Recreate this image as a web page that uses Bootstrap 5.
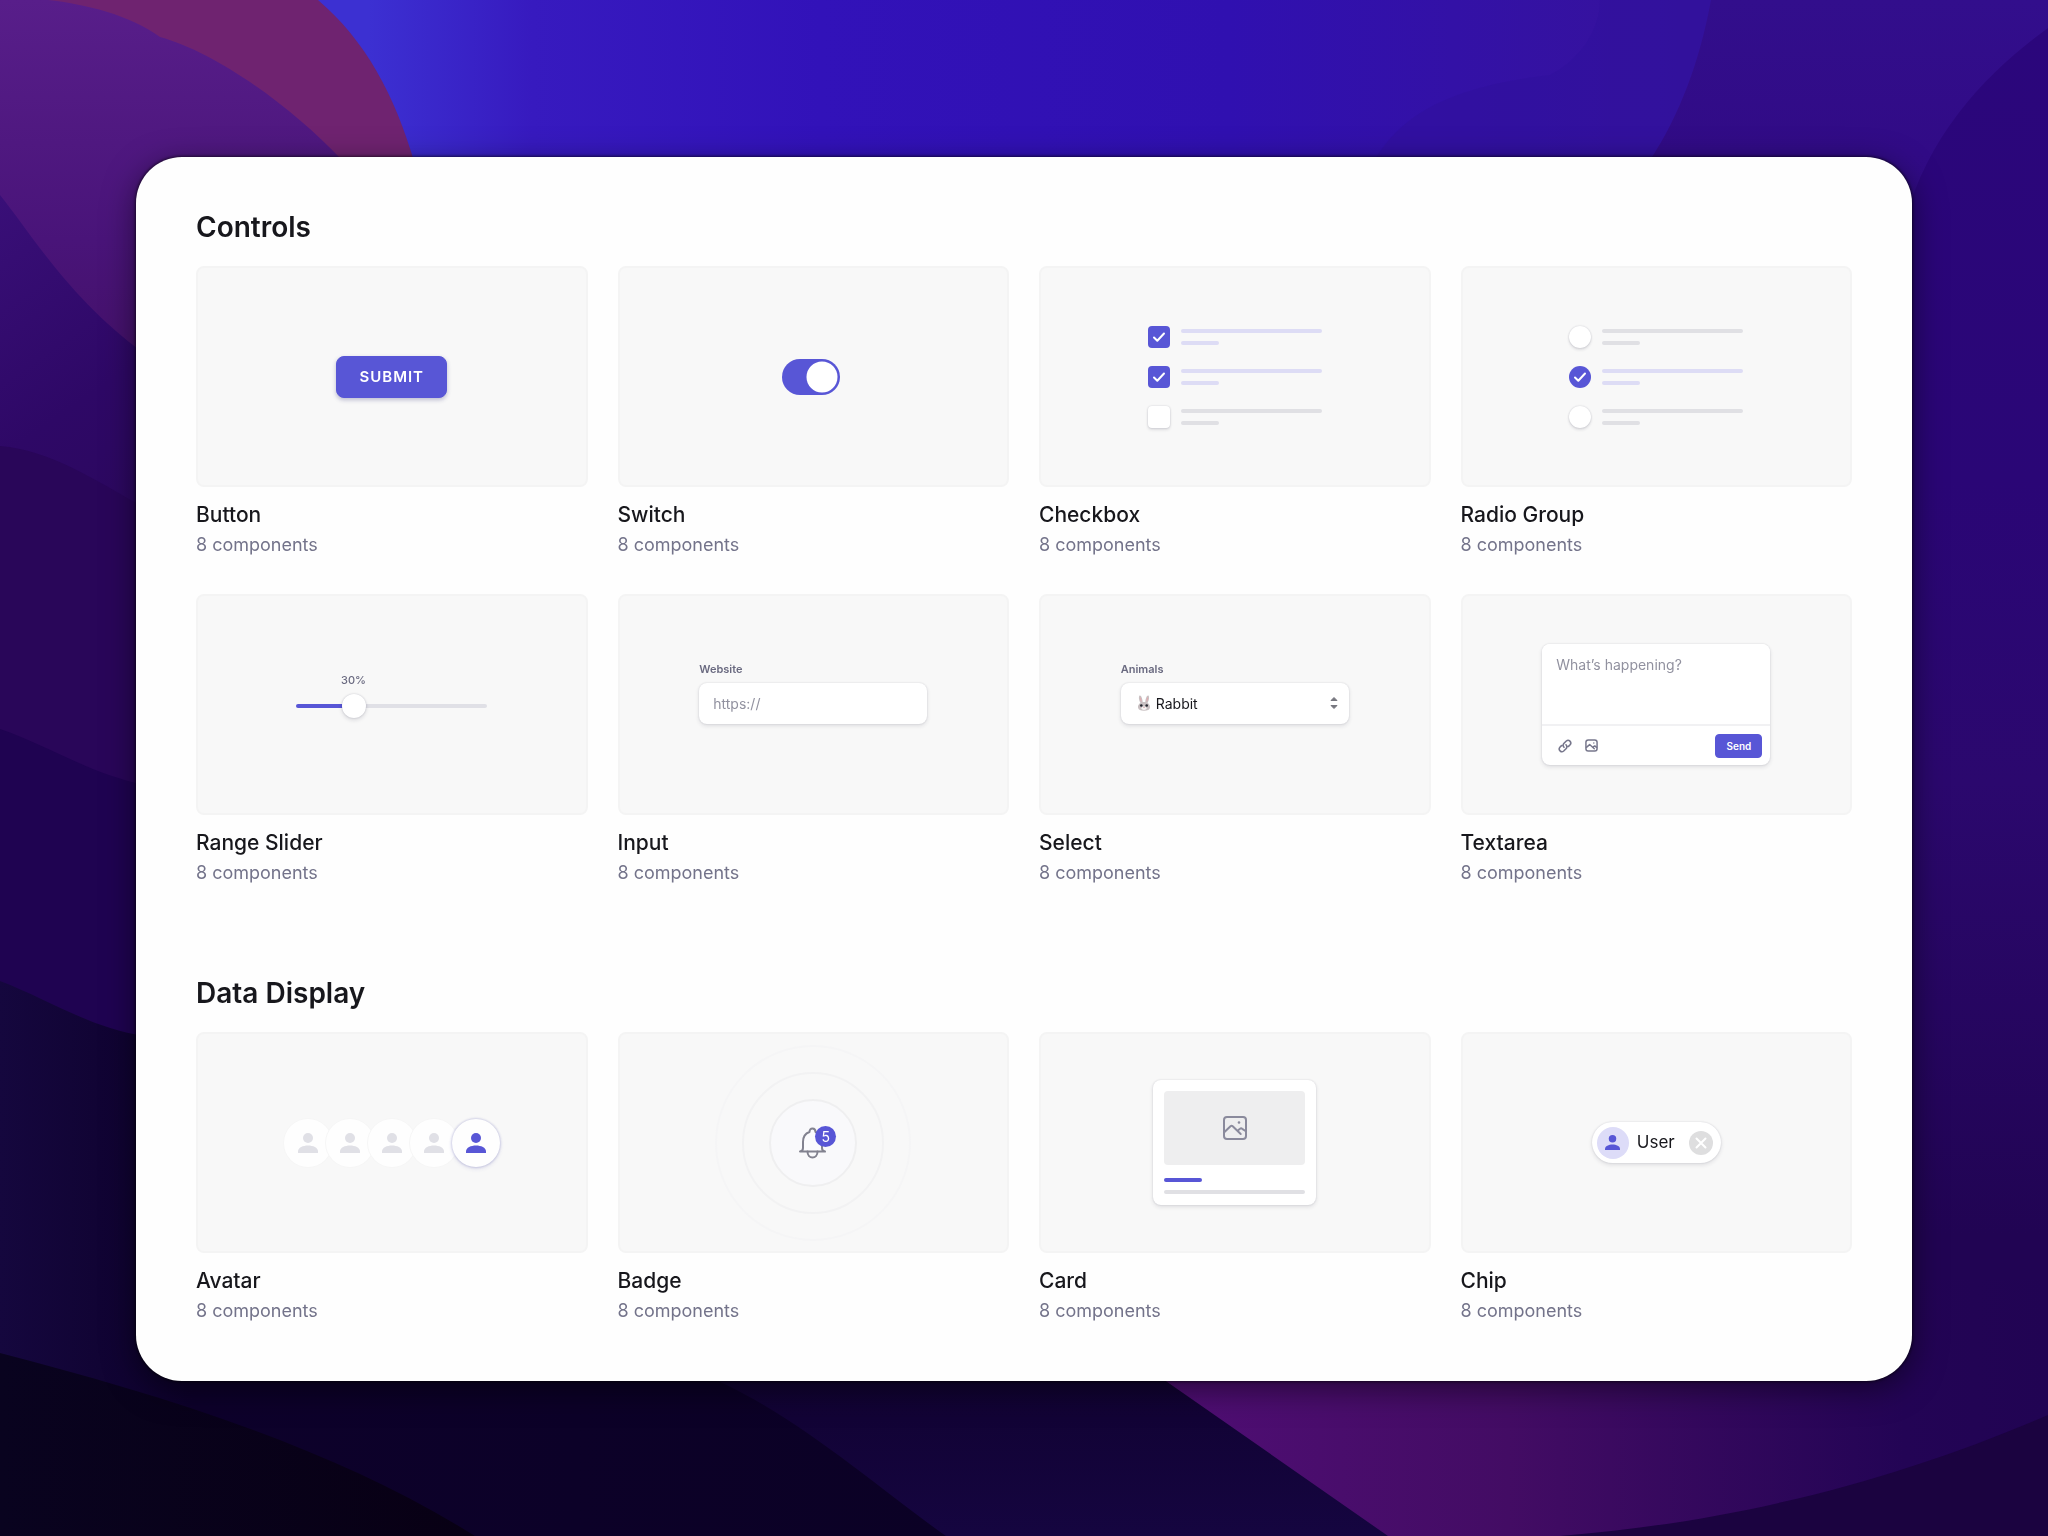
<!DOCTYPE html>
<html lang="en">
<head>
<meta charset="utf-8">
<meta name="viewport" content="width=device-width, initial-scale=1">
<title>Component library</title>
<link href="https://cdn.jsdelivr.net/npm/bootstrap@5.3.0/dist/css/bootstrap.min.css" rel="stylesheet">
<style>
:root{--accent:#5856d6;--ink:#17171c;--dim:#73738a;--line:#e0e0e4;--line-accent:#dddcf5}
body{font-family:Inter,"Liberation Sans",sans-serif;color:var(--ink);background:#1c0348;min-height:100vh}
.wallpaper{position:fixed;inset:0;width:100%;height:100%;z-index:-1}
.page{padding:157px 136px 155px}
.panel{background:#fefefe;border-radius:46px;padding:52px 60px 58px;box-shadow:0 0 3px 1px rgba(0,0,0,.55),0 8px 32px rgba(0,0,0,.5)}
.group + .group{margin-top:90px}
.group-title{font-size:28px;line-height:36px;font-weight:600;margin:0 0 21px}
.tiles{--bs-gutter-x:30px;--bs-gutter-y:37px}
.preview{height:221px;background:#f8f8f8;border:2px solid #f4f4f4;border-radius:8px;overflow:hidden}
.tile-title{font-size:21px;line-height:28px;font-weight:500;margin:14px 0 4px}
.tile-note{font-size:18px;line-height:24px;color:var(--dim);margin:0}
.raised{background:#fff;border:0;box-shadow:0 0 2px rgba(30,30,60,.14),0 2px 4px rgba(30,30,60,.12)}
.btn-accent{--bs-btn-color:#fff;--bs-btn-bg:var(--accent);--bs-btn-border-color:var(--accent);--bs-btn-hover-color:#fff;--bs-btn-hover-bg:#4a48c4;--bs-btn-hover-border-color:#4a48c4}
.btn-submit{font-size:15px;line-height:20px;font-weight:600;letter-spacing:1px;padding:10px 22px;border-radius:8px;box-shadow:0 2px 4px rgba(50,50,120,.3)}
.form-check-input{margin:0;border:0;float:none}
.toggle.form-check-input{width:58px;height:36px;margin-right:4px;border-radius:18px;background-color:#d8d8de;background-size:32px 32px;background-repeat:no-repeat;background-position:left 2px center;--knob:url("data:image/svg+xml,%3csvg xmlns='http://www.w3.org/2000/svg' viewBox='0 0 32 32'%3e%3ccircle cx='16' cy='16' r='15.5' fill='%23fff'/%3e%3c/svg%3e");background-image:var(--knob)}
.toggle.form-check-input:checked{background-image:var(--knob);background-position:right 2px center}
.form-check-input[type]:checked{background-color:var(--accent)}
.tick{width:22px;height:22px;flex:none}
.tick:not(:checked){background:#fff;box-shadow:0 0 2px rgba(30,30,60,.2),0 2px 3px rgba(30,30,60,.12)}
.tick:checked[type]{background-image:url("data:image/svg+xml,%3csvg xmlns='http://www.w3.org/2000/svg' viewBox='0 0 22 22'%3e%3cpath fill='none' stroke='%23fff' stroke-width='2' stroke-linecap='round' stroke-linejoin='round' d='m6 11.5 3.300 3.300 6.700-7.300'/%3e%3c/svg%3e")}
.tick[type=checkbox]{border-radius:4px}
.options{gap:18px;width:174px}
.option{gap:11px}
.bars{gap:8px}
.bar{height:4px;border-radius:2px;background:var(--line)}
.bar-short{width:38px}
.option:has(:checked) .bar{background:var(--line-accent)}
.field{width:228px;padding-bottom:25px}
.field-label{font-size:11px;line-height:16px;font-weight:600;color:#6a6a80;margin-bottom:6px}
.field-box{height:41px;border-radius:8px;padding:0 11px 0 14px;font-size:14px;width:100%;color:var(--ink)}
.field-box::placeholder,.post-text::placeholder{color:#91919f;opacity:1}
.field select{appearance:none;border:0;background:none;font-size:14px;color:var(--ink);padding:0}
.slider{--value:30%;width:191px}
.slider output{width:calc(var(--value) * 2);font-weight:500;margin-bottom:16px}
.slider-track{height:4px;margin-bottom:4px;border-radius:2px;background:linear-gradient(to right,var(--accent) var(--value),#e0e0e6 var(--value))}
.slider-track input{appearance:none;background:none;height:24px;margin:0 -12px;flex:1 0 auto;width:calc(100% + 24px)}
.slider-track input::-webkit-slider-thumb{appearance:none;width:24px;height:24px;border-radius:50%;background:#fff;box-shadow:0 0 2px rgba(30,30,60,.2),0 2px 4px rgba(30,30,60,.14)}
.slider-track input::-moz-range-thumb{width:24px;height:24px;border:0;border-radius:50%;background:#fff}
.post{width:228px;border-radius:8px;overflow:hidden}
.post-text{height:80px;border:0;resize:none;font-size:14px;line-height:20px;padding:11px 14px;color:var(--ink)}
.post-bar{height:41px;border-top:2px solid #f1f1f3;padding:0 8px 0 14px}
.icon-btn{border:0;background:none;padding:0;width:18px;height:18px;display:flex;align-items:center;justify-content:center;color:#77778c}
.btn-send{font-size:10px;line-height:14px;font-weight:600;padding:4px 10px;border-radius:4px}
.face{width:48px;height:48px;border-radius:50%;background:#fefefe;box-shadow:0 0 0 1px #f6f6f6;color:#e0e0e6}
.face + .face{margin-left:-6px}
.face-on{color:var(--accent);box-shadow:0 0 2px 1px rgba(60,60,160,.18),0 2px 4px rgba(60,60,160,.12)}
.bell{width:28px;height:32px}
.rings{position:absolute;left:-86px;top:-84px}
.count{left:16px;top:-1px;width:21px;height:21px;border-radius:50%;background:var(--accent);color:#fff;font-size:14px;line-height:21px;text-align:center}
.mini{width:163px;border-radius:8px;padding:11px}
.mini-pic{height:74px;border-radius:4px;background:#eeeeef;color:#8a8a9c;margin-bottom:13px}
.bar-accent{background:var(--accent);width:38px}
.chip{height:41px;border-radius:21px;padding:0 8px 0 5px;font-size:17px;font-weight:400}
.chip-face{width:32px;height:32px;border-radius:50%;background:#dddcf8;color:var(--accent)}
.chip-x{width:24px;height:24px;border-radius:50%;background:#dededf;color:#fff;border:0;padding:0;margin-left:6px}
</style>
</head>
<body>
<svg class="wallpaper" viewBox="0 0 2048 1536" preserveAspectRatio="none" aria-hidden="true">
  <defs>
    <linearGradient id="sky"><stop offset=".18" stop-color="#3c30d2"/><stop offset=".26" stop-color="#371abf"/><stop offset=".4" stop-color="#3212b9"/><stop offset=".6" stop-color="#3010b0"/><stop offset=".82" stop-color="#36129c"/></linearGradient>
    <linearGradient id="east" x2="0" y2="1"><stop offset="0" stop-color="#320e8c"/><stop offset=".1" stop-color="#310b86"/><stop offset=".4" stop-color="#2a0472"/><stop offset="1" stop-color="#220456"/></linearGradient>
    <linearGradient id="east2" x2="0" y2="1"><stop offset="0" stop-color="#2b067c"/><stop offset=".3" stop-color="#2a0676"/><stop offset=".5" stop-color="#2b086e"/><stop offset=".8" stop-color="#210453"/></linearGradient>
    <linearGradient id="plum" x2="0" y2="1"><stop offset="0" stop-color="#581e8a"/><stop offset=".6" stop-color="#491479"/><stop offset="1" stop-color="#421064"/></linearGradient>
    <linearGradient id="w1" x2=".2" y2="1"><stop offset="0" stop-color="#390f78"/><stop offset=".5" stop-color="#2e0866"/><stop offset="1" stop-color="#2a085a"/></linearGradient>
    <linearGradient id="w4"><stop offset="0" stop-color="#15073e"/><stop offset=".2" stop-color="#0d012b"/><stop offset="1" stop-color="#0b0125"/></linearGradient>
    <linearGradient id="navy" x2="0" y2="1"><stop offset="0" stop-color="#0f012c"/><stop offset="1" stop-color="#150540"/></linearGradient>
    <linearGradient id="magenta"><stop offset="0" stop-color="#500e75"/><stop offset=".4" stop-color="#430c64"/><stop offset=".84" stop-color="#230455"/><stop offset="1" stop-color="#210453"/></linearGradient>
    <linearGradient id="night"><stop offset="0" stop-color="#09031f"/><stop offset="1" stop-color="#080014"/></linearGradient>
  </defs>
  <rect width="2048" height="1536" fill="url(#sky)"/>
  <path fill="#31109c" d="M1365 180C1390 120 1440 88 1550 75 1580 60 1600 30 1600 0H1720V180Z" opacity=".6"/>
  <path fill="url(#east)" d="M1711 0C1700 60 1680 115 1650 160V1536H2048V0Z"/>
  <path fill="url(#east2)" d="M2048 28C1990 70 1930 130 1905 220V1536H2048Z"/>
  <path fill="#6f2370" d="M0 0H318C365 40 395 95 415 165L420 300H0Z"/>
  <path fill="url(#plum)" d="M0 0H48C85 4 130 15 160 37 215 52 290 105 342 160V400H0Z"/>
  <path fill="url(#w1)" d="M0 195C30 232 70 300 145 354V700H0Z"/>
  <path fill="#290659" d="M0 446C50 450 95 480 145 508V900H0Z"/>
  <path fill="#1f0351" d="M0 729C45 744 90 774 145 785V1200H0Z"/>
  <path fill="url(#w4)" d="M0 981C50 1000 90 1028 145 1036V1300H960V1536H0Z"/>
  <path fill="url(#navy)" d="M690 1370C780 1400 880 1490 946 1536H1400V1300H690Z"/>
  <path fill="url(#magenta)" d="M1150 1370 1388 1536H2048V1280H1905V1370Z"/>
  <path fill="#1b0340" d="M2048 1415C1920 1470 1760 1520 1560 1536H2048Z"/>
  <path fill="url(#night)" d="M0 1353C150 1392 330 1445 475 1536H0Z"/>
</svg>

<svg class="d-none" aria-hidden="true">
  <symbol id="person" viewBox="0 0 20 20"><circle cx="10" cy="5" r="5"/><path d="M0 20v-1.500C0 14.500 5 12.500 10 12.500s10 2 10 6V20Z"/></symbol>
  <symbol id="picture" viewBox="0 0 24 24"><g fill="none" stroke="currentColor" stroke-width="2" stroke-linejoin="round" stroke-linecap="round"><rect x="1" y="1" width="22" height="22" rx="3"/><path d="m1.500 16 6-5.700c.7-.6 1.500-.6 2.200 0l8 7.700M14.500 14.800l2.500-2c.7-.6 1.500-.6 2.200 0L22.500 15"/></g><circle cx="16" cy="6.500" r="1.300" fill="currentColor"/></symbol>
</svg>

<main class="page">
  <div class="panel">
    <section class="group">
      <h2 class="group-title">Controls</h2>
      <div class="row row-cols-4 tiles">
        <article class="col">
          <div class="preview d-flex align-items-center justify-content-center">
            <button type="button" class="btn btn-accent btn-submit">SUBMIT</button>
          </div>
          <h3 class="tile-title">Button</h3><p class="tile-note">8 components</p>
        </article>
        <article class="col">
          <div class="preview d-flex align-items-center justify-content-center">
            <input class="form-check-input toggle" type="checkbox" role="switch" aria-label="Switch" checked>
          </div>
          <h3 class="tile-title">Switch</h3><p class="tile-note">8 components</p>
        </article>
        <article class="col">
          <div class="preview d-flex align-items-center justify-content-center">
            <div class="options d-flex flex-column">
              <label class="option d-flex align-items-center"><input class="form-check-input tick" type="checkbox" aria-label="Option 1" checked><span class="bars d-flex flex-column flex-fill"><span class="bar"></span><span class="bar bar-short"></span></span></label>
              <label class="option d-flex align-items-center"><input class="form-check-input tick" type="checkbox" aria-label="Option 2" checked><span class="bars d-flex flex-column flex-fill"><span class="bar"></span><span class="bar bar-short"></span></span></label>
              <label class="option d-flex align-items-center"><input class="form-check-input tick" type="checkbox" aria-label="Option 3"><span class="bars d-flex flex-column flex-fill"><span class="bar"></span><span class="bar bar-short"></span></span></label>
            </div>
          </div>
          <h3 class="tile-title">Checkbox</h3><p class="tile-note">8 components</p>
        </article>
        <article class="col">
          <div class="preview d-flex align-items-center justify-content-center">
            <div class="options d-flex flex-column">
              <label class="option d-flex align-items-center"><input class="form-check-input tick" type="radio" name="choice" aria-label="Choice 1"><span class="bars d-flex flex-column flex-fill"><span class="bar"></span><span class="bar bar-short"></span></span></label>
              <label class="option d-flex align-items-center"><input class="form-check-input tick" type="radio" name="choice" aria-label="Choice 2" checked><span class="bars d-flex flex-column flex-fill"><span class="bar"></span><span class="bar bar-short"></span></span></label>
              <label class="option d-flex align-items-center"><input class="form-check-input tick" type="radio" name="choice" aria-label="Choice 3"><span class="bars d-flex flex-column flex-fill"><span class="bar"></span><span class="bar bar-short"></span></span></label>
            </div>
          </div>
          <h3 class="tile-title">Radio Group</h3><p class="tile-note">8 components</p>
        </article>
        <article class="col">
          <div class="preview d-flex align-items-center justify-content-center">
            <div class="field slider">
              <output class="field-label d-block text-center" for="range">30%</output>
              <div class="slider-track d-flex align-items-center"><input id="range" type="range" min="0" max="100" value="30" aria-label="Range"></div>
            </div>
          </div>
          <h3 class="tile-title">Range Slider</h3><p class="tile-note">8 components</p>
        </article>
        <article class="col">
          <div class="preview d-flex align-items-center justify-content-center">
            <div class="field">
              <label class="field-label d-block" for="website">Website</label>
              <input id="website" type="text" class="field-box raised" placeholder="https://">
            </div>
          </div>
          <h3 class="tile-title">Input</h3><p class="tile-note">8 components</p>
        </article>
        <article class="col">
          <div class="preview d-flex align-items-center justify-content-center">
            <div class="field">
              <label class="field-label d-block" for="animal">Animals</label>
              <div class="field-box raised d-flex align-items-center">
                <svg class="me-1 flex-shrink-0" width="17" height="16" viewBox="-1 0 17 16" aria-hidden="true"><path fill="#c9c0c2" d="M4.500 8C2.500 5 2.600 1 3.700.6 5.300.2 6.500 4 6.700 7h2.600C9.500 4 10.700.2 12.300.6c1.100.4 1.200 4.400-.8 7.400 1.800 1 2.700 2.500 2.500 4.500-.3 2.200-2.500 3.200-6 3.200s-5.700-1-6-3.200C1.800 10.500 2.700 9 4.500 8Z"/><path fill="#e6a9ae" d="M4 2c.8.500 1.500 2.800 1.600 5-1-.8-2-3-1.600-5Zm8 0c-.8.500-1.500 2.800-1.600 5 1-.8 2-3 1.600-5Z"/><circle cx="5.300" cy="10.500" r="1.300" fill="#26262e"/><circle cx="10.700" cy="10.500" r="1.300" fill="#26262e"/><ellipse cx="8" cy="13.200" rx="2.500" ry="1.800" fill="#f7f4f4"/><path fill="#c9767f" d="M7.200 12h1.600L8 13Z"/></svg>
                <select id="animal" class="flex-fill"><option>Rabbit</option></select>
                <svg class="flex-shrink-0" width="8" height="14" viewBox="0 0 8 14" fill="#77777f" stroke="#77777f" stroke-linejoin="round" aria-hidden="true"><path d="m1 4.500 3-3 3 3ZM1 9.500l3 3 3-3Z"/></svg>
              </div>
            </div>
          </div>
          <h3 class="tile-title">Select</h3><p class="tile-note">8 components</p>
        </article>
        <article class="col">
          <div class="preview d-flex align-items-center justify-content-center">
            <div class="post raised d-flex flex-column">
              <textarea class="post-text" placeholder="What’s happening?" aria-label="Post"></textarea>
              <div class="post-bar d-flex align-items-center gap-2">
                <button type="button" class="icon-btn" aria-label="Attach link"><svg width="14" height="14" viewBox="0 0 14 14" fill="none" stroke="currentColor" stroke-width="1.600" stroke-linecap="round"><path d="M6 8.200a2.800 2.800 0 0 1-.2-3.700L8.300 2a2.700 2.700 0 0 1 3.800 3.800l-1.600 1.600M8 5.800a2.800 2.800 0 0 1 .2 3.700L5.700 12a2.700 2.700 0 0 1-3.800-3.800l1.600-1.600"/></svg></button>
                <button type="button" class="icon-btn" aria-label="Attach picture"><svg width="13" height="13" viewBox="0 0 14 14" fill="none" stroke="currentColor" stroke-width="1.600" stroke-linecap="round" stroke-linejoin="round"><rect x="1" y="1" width="12" height="12" rx="2.500"/><path d="M1.500 9 5 6l5 4.500M8.500 8.800 10.500 7.500 12.500 9"/><path d="M9.500 4.200v.1"/></svg></button>
                <button type="button" class="btn btn-accent btn-send ms-auto">Send</button>
              </div>
            </div>
          </div>
          <h3 class="tile-title">Textarea</h3><p class="tile-note">8 components</p>
        </article>
      </div>
    </section>

    <section class="group">
      <h2 class="group-title">Data Display</h2>
      <div class="row row-cols-4 tiles">
        <article class="col">
          <div class="preview d-flex align-items-center justify-content-center">
            <span class="face d-flex align-items-center justify-content-center"><svg width="20" height="20" fill="currentColor"><use href="#person"/></svg></span>
            <span class="face d-flex align-items-center justify-content-center"><svg width="20" height="20" fill="currentColor"><use href="#person"/></svg></span>
            <span class="face d-flex align-items-center justify-content-center"><svg width="20" height="20" fill="currentColor"><use href="#person"/></svg></span>
            <span class="face d-flex align-items-center justify-content-center"><svg width="20" height="20" fill="currentColor"><use href="#person"/></svg></span>
            <span class="face face-on d-flex align-items-center justify-content-center"><svg width="20" height="20" fill="currentColor"><use href="#person"/></svg></span>
          </div>
          <h3 class="tile-title">Avatar</h3><p class="tile-note">8 components</p>
        </article>
        <article class="col">
          <div class="preview d-flex align-items-center justify-content-center">
            <div class="bell position-relative">
              <svg class="rings" width="200" height="200" viewBox="0 0 200 200" fill="none" stroke="#f1f1f2" stroke-width="2" aria-hidden="true"><circle cx="100" cy="100" r="97" stroke="#f5f5f6"/><circle cx="100" cy="100" r="70" stroke="#f2f2f3"/><circle cx="100" cy="100" r="43" fill="#f9f9fb" stroke="#efeff0"/></svg>
              <svg class="position-relative d-block" width="28" height="32" viewBox="0 0 28 32" fill="none" stroke="#82828f" stroke-width="2" stroke-linecap="round" stroke-linejoin="round" aria-hidden="true"><path fill="#fbfbfd" d="M1 24.500c2-.3 3-1.500 3-3.500v-6c0-5 2-8.500 6.500-10 0-2.300 1.200-3.500 3-3.500s3 1.200 3 3.500c4.500 1.500 6.500 5 6.500 10v6c0 2 1 3.200 3 3.500Z"/><path d="M8.500 24.500c0 8 10 8 10 0"/></svg>
              <span class="count position-absolute">5</span>
            </div>
          </div>
          <h3 class="tile-title">Badge</h3><p class="tile-note">8 components</p>
        </article>
        <article class="col">
          <div class="preview d-flex align-items-center justify-content-center">
            <div class="mini raised">
              <div class="mini-pic d-flex align-items-center justify-content-center"><svg width="24" height="24"><use href="#picture"/></svg></div>
              <div class="bars d-flex flex-column"><span class="bar bar-accent"></span><span class="bar"></span></div>
            </div>
          </div>
          <h3 class="tile-title">Card</h3><p class="tile-note">8 components</p>
        </article>
        <article class="col">
          <div class="preview d-flex align-items-center justify-content-center">
            <div class="chip raised d-flex align-items-center gap-2">
              <span class="chip-face d-flex align-items-center justify-content-center"><svg width="15" height="15" fill="currentColor"><use href="#person"/></svg></span>
              <span>User</span>
              <button type="button" class="chip-x d-flex align-items-center justify-content-center" aria-label="Remove"><svg width="12" height="12" viewBox="0 0 12 12" fill="none" stroke="currentColor" stroke-width="2" stroke-linecap="round"><path d="m1.500 1.500 9 9M10.500 1.500l-9 9"/></svg></button>
            </div>
          </div>
          <h3 class="tile-title">Chip</h3><p class="tile-note">8 components</p>
        </article>
      </div>
    </section>
  </div>
</main>
<script src="https://cdn.jsdelivr.net/npm/bootstrap@5.3.0/dist/js/bootstrap.bundle.min.js"></script>
</body>
</html>
